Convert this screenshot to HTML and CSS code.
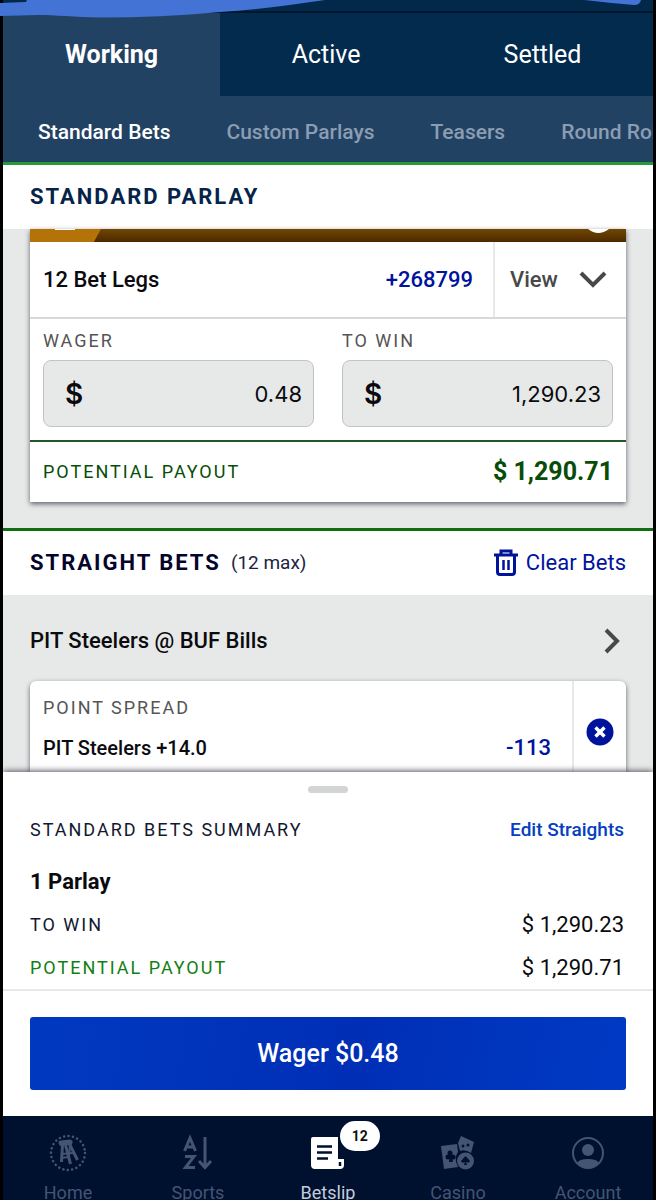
FILE: index.html
```html
<!DOCTYPE html>
<html lang="en">
<head>
    <meta charset="utf-8">
    <meta name="viewport" content="width=device-width, initial-scale=1">
    <title>Betslip</title>
    <link rel="stylesheet" href="styles.css">
</head>
<body>
    <svg class="scribble" viewBox="0 0 656 20" preserveAspectRatio="none" aria-hidden="true">
        <path d="M0 3L26 2L27 0H325C290 5 255 10 220 12C180 16 140 17.500 100 17.500C75 17 55 15 38 15L0 16Z" fill="#4473d6"/>
        <path d="M584 0C604 2 620 4 634 5Q640 5 641 0Z" fill="#4473d6"/>
    </svg>
    <div class="app">
        <header class="header">
            <div class="status"></div>
            <div class="tabs">
                <button class="tab tab-on" type="button">Working</button>
                <div class="tabs-rest">
                    <button class="tab" type="button">Active</button>
                    <button class="tab" type="button">Settled</button>
                </div>
            </div>
            <nav class="subtabs">
                <a class="subtab subtab-on" href="#">Standard Bets</a>
                <a class="subtab" href="#">Custom Parlays</a>
                <a class="subtab" href="#">Teasers</a>
                <a class="subtab" href="#">Round Robins</a>
            </nav>
        </header>

        <main class="content">
            <section>
                <div class="section-head">
                    <h2 class="section-title">STANDARD PARLAY</h2>
                </div>
                <div class="section-body">
                    <div class="card">
                        <svg class="promo" viewBox="0 0 597 13" preserveAspectRatio="none" aria-hidden="true">
                            <defs>
                                <linearGradient id="brown" x1="0" y1="0" x2="0" y2="1">
                                    <stop offset="0" stop-color="#704700"/>
                                    <stop offset="1" stop-color="#4d2800"/>
                                </linearGradient>
                            </defs>
                            <rect width="597" height="13" fill="url(#brown)"/>
                            <path d="M0 0H71L64 13H0Z" fill="#b37309"/>
                            <rect x="25" width="20" height="1" fill="#fff"/>
                            <path d="M559 0Q569 8 580 0Z" fill="#fff"/>
                        </svg>
                        <div class="legs">
                            <span class="legs-name">12 Bet Legs</span>
                            <span class="odds">+268799</span>
                            <button class="view" type="button">
                                View
                                <svg width="28" height="18" viewBox="0 0 28 18" aria-hidden="true">
                                    <path d="M2 2L14 14L26 2" fill="none" stroke="#484848" stroke-width="4"/>
                                </svg>
                            </button>
                        </div>
                        <div class="amounts">
                            <div class="field">
                                <label class="caps" for="wager">WAGER</label>
                                <div class="box">
                                    <span class="dollar">$</span>
                                    <input class="amount" type="text" id="wager" value="0.48">
                                </div>
                            </div>
                            <div class="field">
                                <label class="caps" for="towin">TO WIN</label>
                                <div class="box">
                                    <span class="dollar">$</span>
                                    <input class="amount" type="text" id="towin" value="1,290.23">
                                </div>
                            </div>
                        </div>
                        <div class="payout">
                            <span class="caps">POTENTIAL PAYOUT</span>
                            <strong class="payout-value">$ 1,290.71</strong>
                        </div>
                    </div>
                </div>
            </section>

            <section class="straights">
                <div class="section-head">
                    <h2 class="section-title">STRAIGHT BETS</h2>
                    <span class="max">(12 max)</span>
                    <button class="clear" type="button">
                        <svg width="24" height="28" viewBox="0 0 24 28" aria-hidden="true">
                            <g fill="none" stroke="#00139b" stroke-width="3">
                                <path d="M0 6H24M7 6V2H17V6M3.500 6V23Q3.500 25.500 6 25.500H18Q20.500 25.500 20.500 23V6"/>
                                <path d="M9.500 11V21M14.500 11V21" stroke-width="2.500"/>
                            </g>
                        </svg>
                        Clear Bets
                    </button>
                </div>
                <div class="section-body">
                    <a class="event" href="#">
                        PIT Steelers @ BUF Bills
                        <svg width="28" height="26" viewBox="0 0 28 26" aria-hidden="true">
                            <path d="M8 2L19 13L8 24" fill="none" stroke="#484848" stroke-width="4"/>
                        </svg>
                    </a>
                    <div class="card bet">
                        <div class="bet-info">
                            <span class="caps">POINT SPREAD</span>
                            <div class="bet-line">
                                <span>PIT Steelers +14.0</span>
                                <span class="odds">-113</span>
                            </div>
                        </div>
                        <button class="remove" type="button" aria-label="Remove bet">
                            <svg width="28" height="28" viewBox="0 0 28 28" aria-hidden="true">
                                <circle cx="14" cy="14" r="13.500" fill="#00139b"/>
                                <path d="M9.500 9.500L18.500 18.500M18.500 9.500L9.500 18.500" stroke="#fff" stroke-width="3.500"/>
                            </svg>
                        </button>
                    </div>
                </div>
            </section>
        </main>

        <section class="sheet">
            <div class="handle"></div>
            <div class="summary">
                <div class="row row-head">
                    <h3 class="caps">STANDARD BETS SUMMARY</h3>
                    <a class="edit" href="#">Edit Straights</a>
                </div>
                <div class="row parlay">1 Parlay</div>
                <div class="row">
                    <span class="caps">TO WIN</span>
                    <span class="value">$ 1,290.23</span>
                </div>
                <div class="row">
                    <span class="caps green">POTENTIAL PAYOUT</span>
                    <span class="value">$ 1,290.71</span>
                </div>
            </div>
            <div class="action">
                <button class="wager-btn" type="button">Wager $0.48</button>
            </div>
        </section>

        <nav class="bottom-nav">
            <a class="nav-item" href="#">
                <svg width="38" height="38" viewBox="0 0 38 38" aria-hidden="true">
                    <circle cx="19" cy="19" r="17" fill="none" stroke="#445573" stroke-width="2.500" stroke-linecap="round" stroke-dasharray="0.1 4.350"/>
                    <path d="M9.500 9Q9 6.500 12 6.500L21 5.500Q24 6 23.500 9L22.500 11L11 12Z" fill="#445573"/>
                    <path d="M13.500 11L12.500 28M16.500 11L21.500 30M20.500 10L28.500 26" fill="none" stroke="#445573" stroke-width="3"/>
                    <path d="M21 11L20 22M12 20L25 19M12 24L20 23" fill="none" stroke="#445573" stroke-width="2"/>
                </svg>
                Home
            </a>
            <a class="nav-item" href="#">
                <svg width="38" height="38" viewBox="0 0 38 38" aria-hidden="true">
                    <g fill="none" stroke="#445573" stroke-width="3">
                        <path d="M5.500 17L11 4L16.500 17M7.500 13H14.500"/>
                        <path d="M6 22.500H15L6.500 33.500H16"/>
                        <path d="M26 3V33M20 27L26 33.500L32 27"/>
                    </g>
                </svg>
                Sports
            </a>
            <a class="nav-item nav-on" href="#">
                <svg width="38" height="38" viewBox="0 0 38 38" aria-hidden="true">
                    <path d="M2 5Q2 3 4 3H29V25H35V31Q35 35 31 35H6Q2 35 2 31Z" fill="#fff"/>
                    <path d="M8 12.500H23M8 18.500H23M8 24.500H19M31 28V32" stroke="#00102f" stroke-width="2.500"/>
                </svg>
                Betslip
                <span class="badge">12</span>
            </a>
            <a class="nav-item" href="#">
                <svg width="38" height="38" viewBox="0 0 38 38" aria-hidden="true">
                    <path d="M2 12L18 10L19 18Q16 22 17 28L19 33L5 35Z" fill="#445573"/>
                    <path d="M19 9L22 2L35 8L32 19Q26 15 21 17Z" fill="#445573"/>
                    <circle cx="24" cy="12" r="1.500" fill="#00102f"/>
                    <circle cx="29" cy="11" r="1.500" fill="#00102f"/>
                    <g fill="#00102f">
                        <circle cx="11" cy="19" r="2.500"/>
                        <circle cx="9" cy="23" r="2.500"/>
                        <circle cx="14" cy="23" r="2.500"/>
                        <path d="M11 21H12.500L14 28H10Z"/>
                    </g>
                    <circle cx="26.500" cy="27" r="8.500" fill="#445573"/>
                    <path d="M26.500 22L31 27Q30 30 27 28L28 31H25L26 28Q23 30 22 27Z" fill="#00102f"/>
                </svg>
                Casino
            </a>
            <a class="nav-item" href="#">
                <svg width="38" height="38" viewBox="0 0 38 38" aria-hidden="true">
                    <circle cx="19" cy="19" r="15" fill="none" stroke="#445573" stroke-width="2"/>
                    <circle cx="19" cy="16" r="6" fill="#445573"/>
                    <path d="M8 29Q10 25 19 25Q28 25 30 29Q26 34 19 34Q12 34 8 29Z" fill="#445573"/>
                </svg>
                Account
            </a>
        </nav>
    </div>
</body>
</html>
```
FILE: styles.css
```css
* {
    box-sizing: border-box;
}
body {
    margin: 0;
    background-color: #000;
    font-family: Roboto, "Liberation Sans", sans-serif;
    font-size: 22px;
    line-height: 28px;
    color: #0b0b0f;
    overflow: hidden;
}
button, input {
    font: inherit;
    color: inherit;
    background: none;
    border: none;
    padding: 0;
    margin: 0;
}
button {
    cursor: pointer;
}
a {
    color: inherit;
    text-decoration: none;
}
h2, h3 {
    margin: 0;
}
svg {
    flex: none;
}
.scribble {
    position: absolute;
    top: 0;
    left: 0;
    width: 100%;
    height: 20px;
    z-index: 2;
}
.app {
    display: flex;
    flex-direction: column;
    height: 100vh;
    margin: 0 3px;
    background: #fff;
}

/* header */
.header {
    flex: none;
    background: #224263;
    border-bottom: 3px solid #269a35;
    color: #fff;
}
.status {
    height: 13px;
    background: #03294a;
    border-bottom: 2px solid #011531;
}
.tabs {
    display: flex;
    height: 83px;
    font-size: 25px;
}
.tab-on {
    width: 33.4%;
    font-weight: bold;
}
.tabs-rest {
    flex: 1;
    display: flex;
    justify-content: space-around;
    background: #032b4e;
}
.subtabs {
    display: flex;
    align-items: center;
    gap: 56px;
    height: 66px;
    padding: 6px 0 0 35px;
    font-size: 21px;
    font-weight: 500;
    white-space: nowrap;
    overflow: hidden;
}
.subtab {
    color: #8b9db3;
}
.subtab-on {
    color: #fff;
}

/* sections */
.content {
    flex: 1;
    min-height: 0;
    overflow: hidden;
    background: #e7e9e8;
}
.straights {
    border-top: 3px solid #0f6f10;
}
.section-head {
    display: flex;
    align-items: center;
    height: 64px;
    padding: 0 27px;
    background: #fff;
}
.section-title {
    font-size: 22px;
    letter-spacing: 2px;
    color: #06234a;
}
.straights .section-title {
    color: #05052c;
}
.max {
    margin-left: 10px;
    font-size: 19px;
    color: #1b2340;
}
.clear {
    display: flex;
    align-items: center;
    gap: 8px;
    margin-left: auto;
    color: #00139b;
}
.section-body {
    padding: 0 27px 26px;
}
.card {
    background: #fff;
    box-shadow: 0 2px 5px #60606c;
}
.promo {
    display: block;
    width: 100%;
    height: 13px;
}
.legs {
    display: flex;
    align-items: center;
    height: 77px;
    padding-left: 13px;
    border-bottom: 2px solid #d8d8d8;
    font-weight: 500;
}
.legs-name {
    flex: 1;
}
.odds {
    color: #00139b;
    font-size: 22px;
}
.view {
    display: flex;
    align-items: center;
    justify-content: space-between;
    align-self: stretch;
    width: 133px;
    margin-left: 20px;
    padding: 0 19px 0 15px;
    border-left: 2px solid #e8e8ea;
    color: #484848;
}
.amounts {
    display: grid;
    grid-template-columns: repeat(2, minmax(0, 1fr));
    gap: 28px;
    padding: 8px 13px 13px;
}
.caps {
    font-size: 18px;
    font-weight: normal;
    letter-spacing: 2px;
}
.field .caps {
    display: block;
    color: #555;
}
.box {
    display: flex;
    align-items: center;
    height: 67px;
    margin-top: 5px;
    padding: 0 11px 0 21px;
    background: #e7e9e8;
    border: 1px solid #c2c4c4;
    border-radius: 8px;
    font-family: Inter, "Liberation Sans", sans-serif;
}
.dollar {
    font-size: 28px;
    font-weight: 600;
}
.amount {
    flex: 1;
    min-width: 0;
    text-align: right;
}
.payout {
    display: flex;
    align-items: center;
    justify-content: space-between;
    height: 62px;
    padding: 0 13px;
    border-top: 2px solid #25562a;
    color: #074d07;
}
.payout-value {
    font-size: 25px;
}
.event {
    display: flex;
    align-items: center;
    justify-content: space-between;
    height: 86px;
    padding-top: 6px;
    font-weight: 500;
}
.bet {
    display: flex;
    height: 102px;
    border-radius: 6px;
}
.bet-info {
    flex: 1;
    padding: 12px 21px 0 13px;
}
.bet .caps {
    color: #555;
}
.bet-line {
    display: flex;
    align-items: center;
    justify-content: space-between;
    margin-top: 12px;
    font-size: 20px;
    font-weight: 500;
}
.remove {
    display: flex;
    align-items: center;
    justify-content: center;
    width: 54px;
    border-left: 2px solid #e8e8ea;
}

/* summary sheet */
.sheet {
    position: relative;
    flex: none;
    padding-top: 14px;
    background: #fff;
    box-shadow: 0 -1px 6px #50505c;
    clip-path: inset(-12px 0 0 0);
}
.handle {
    width: 40px;
    height: 7px;
    margin: 0 auto 7px;
    border-radius: 4px;
    background: #d3d5d4;
}
.summary {
    padding: 0 29px 0 27px;
    border-bottom: 2px solid #e8e8e8;
}
.row {
    display: flex;
    align-items: center;
    justify-content: space-between;
    height: 43px;
}
.row-head {
    height: 60px;
}
.row .caps {
    color: #12182f;
}
.row .green {
    color: #128012;
}
.edit {
    font-size: 19px;
    font-weight: 500;
    color: #0540c0;
}
.parlay {
    font-weight: bold;
}
.action {
    padding: 26px 27px;
}
.wager-btn {
    display: block;
    width: 100%;
    height: 73px;
    border-radius: 3px;
    background: linear-gradient(100deg, #0039c0, #002fb6 55%, #003ac4);
    color: #fff;
    font-size: 25px;
    font-weight: 500;
}

/* bottom nav */
.bottom-nav {
    position: relative;
    flex: none;
    display: grid;
    grid-template-columns: repeat(5, 1fr);
    height: 84px;
    padding-top: 18px;
    background: #00102f;
    font-size: 18px;
    color: #445573;
    overflow: hidden;
}
.nav-item {
    position: relative;
    display: flex;
    flex-direction: column;
    align-items: center;
    gap: 7px;
}
.nav-on {
    color: #c5cbdb;
}
.badge {
    position: absolute;
    top: -13px;
    left: 59%;
    width: 40px;
    height: 30px;
    border-radius: 15px;
    background: #fff;
    color: #111;
    font-size: 14px;
    font-weight: bold;
    line-height: 30px;
    text-align: center;
}
```
